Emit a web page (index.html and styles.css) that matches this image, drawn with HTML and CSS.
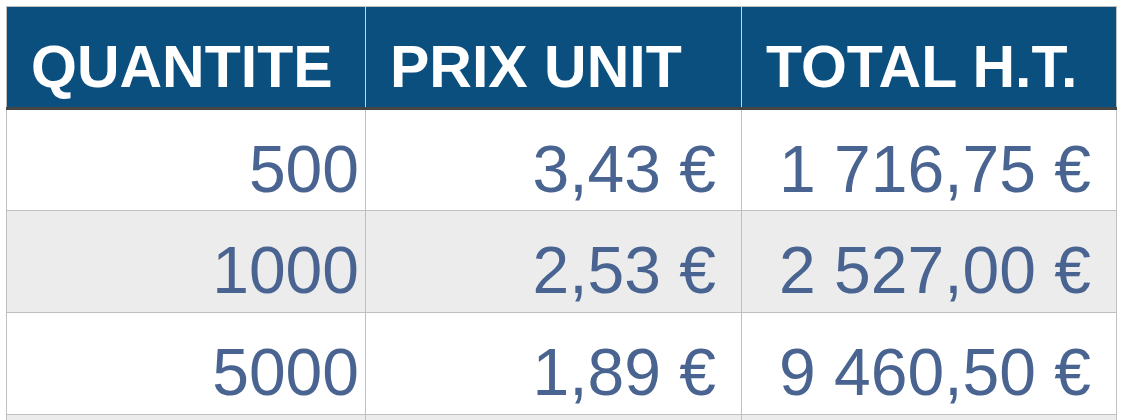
FILE: index.html
```html
<!DOCTYPE html>
<html lang="fr">
<head>
<meta charset="utf-8">
<title>Tarifs</title>
<link rel="stylesheet" href="styles.css">
</head>
<body>
<table class="price-table">
  <colgroup>
    <col class="col-qty">
    <col class="col-unit">
    <col class="col-total">
  </colgroup>
  <thead>
    <tr>
      <th>QUANTITE</th>
      <th>PRIX UNIT</th>
      <th>TOTAL H.T.</th>
    </tr>
  </thead>
  <tbody>
    <tr>
      <td class="num">500</td>
      <td class="cur">3,43 €</td>
      <td class="cur">1 716,75 €</td>
    </tr>
    <tr class="alt">
      <td class="num">1000</td>
      <td class="cur">2,53 €</td>
      <td class="cur">2 527,00 €</td>
    </tr>
    <tr>
      <td class="num">5000</td>
      <td class="cur">1,89 €</td>
      <td class="cur">9 460,50 €</td>
    </tr>
    <tr class="alt">
      <td class="num"></td>
      <td class="cur"></td>
      <td class="cur"></td>
    </tr>
  </tbody>
</table>
</body>
</html>
```
FILE: styles.css
```css
html, body {
  margin: 0;
  padding: 0;
  background: #ffffff;
}

body {
  padding: 6px 0 0 6px;
  font-family: "Liberation Sans", Arial, Helvetica, sans-serif;
}

.price-table {
  border-collapse: collapse;
  table-layout: fixed;
  width: 1110px;
  border: 1px solid #c0c0c0;
}

.col-qty { width: 359px; }
.col-unit { width: 376px; }
.col-total { width: 375px; }

.price-table th {
  background: #0b4f7e;
  color: #ffffff;
  font-weight: bold;
  font-size: 59px;
  line-height: 59px;
  text-align: left;
  padding: 31px 0 10px 24px;
  height: 59px;
  border-left: 1px solid #c8d3de;
  border-bottom: 3px solid #454545;
  white-space: nowrap;
}

.price-table th:first-child {
  border-left: 1px solid #c0c0c0;
}

.price-table td {
  font-size: 66px;
  line-height: 66px;
  color: #4a6491;
  text-align: right;
  padding: 26px 6px 9px 0;
  height: 66px;
  border: 1px solid #c0c0c0;
  white-space: nowrap;
}

.price-table tbody tr:first-child td {
  padding-bottom: 8px;
}

.price-table td.cur {
  padding-right: 25px;
}

.price-table tr.alt td {
  background: #ececec;
}
```
